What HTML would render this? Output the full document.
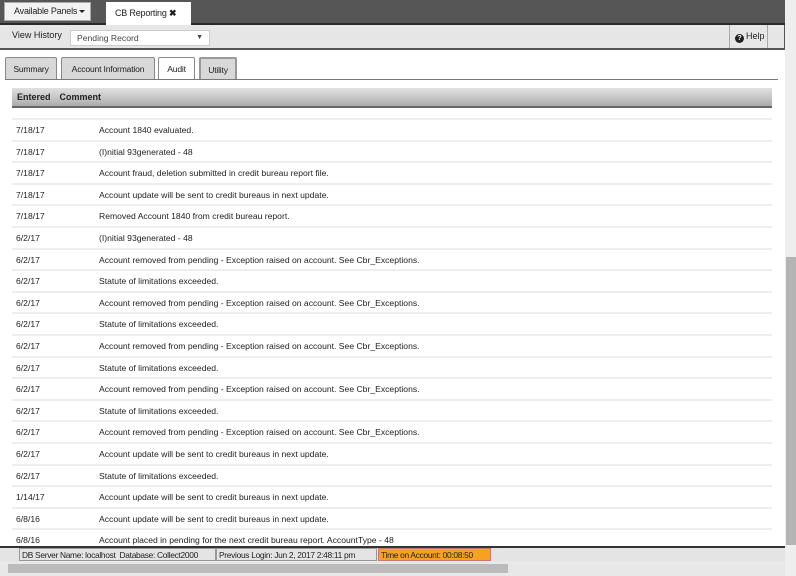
<!DOCTYPE html>
<html><head><style>
*{margin:0;padding:0;box-sizing:border-box}
body{width:796px;height:576px;overflow:hidden;background:#fff;font-family:"Liberation Sans",sans-serif;font-size:9px;color:#222;position:relative}
.abs{position:absolute}
.top{left:0;top:0;width:785px;height:25px;background:#565656;border-bottom:2px solid #2a2a2a}
.btn1{left:4px;top:2px;width:87px;height:19px;background:#f2f2f2;border:1px solid #aaa;font-size:9px;line-height:17px;padding-left:9px;letter-spacing:-0.2px}
.tri{display:inline-block;width:0;height:0;border-left:3px solid transparent;border-right:3px solid transparent;border-top:3px solid #222;vertical-align:middle;margin-left:2px}
.tab1{left:106px;top:2px;width:85px;height:23px;background:#fff;font-size:9px;line-height:22px;padding-left:9px;letter-spacing:-0.2px}
.bar2{left:0;top:25px;width:785px;height:25px;background:#e6e6e6;border-bottom:2px solid #555;border-right:1px solid #555}
.sel{left:70px;top:30px;width:140px;height:16px;background:#fff;border:1px solid #ccc;font-size:8.6px;line-height:14px;padding-left:6px;color:#444}
.help{left:729px;top:25px;width:39px;height:23px;border-left:1px solid #aaa;border-right:1px solid #aaa;font-size:9px;line-height:23px;padding-left:5px}
.q{display:inline-block;width:9px;height:9px;border-radius:50%;background:#222;color:#fff;font-size:7px;line-height:9px;text-align:center;font-weight:bold;margin-right:2px;vertical-align:-1px}
.tab{top:57px;height:22px;border:1px solid #888;border-bottom:none;background:#d8d8d8;font-size:8.6px;line-height:22px;text-align:center;border-radius:2px 2px 0 0;letter-spacing:-0.2px}
.hdr{left:12px;top:88px;width:760px;height:20px;background:linear-gradient(#e0e0e0,#c8c8c8 50%,#aaa);border-bottom:2px solid #666;font-weight:bold;font-size:9px;line-height:19px}
.row{position:absolute;left:12px;width:760px;height:21.6px;border-top:2px solid #eee;font-size:8.6px}
.row span{position:absolute;top:5px}
.status{left:0;top:546px;width:785px;height:15px;background:#e4e4e4;border-top:2px solid #333;font-size:8.4px;line-height:12px;letter-spacing:-0.3px}
.status div{position:absolute;top:0;height:13px;border:1px solid #999;padding:0 2px;white-space:nowrap}
</style></head><body>
<div class="abs top"></div>
<div class="abs btn1">Available Panels<span class="tri"></span></div>
<div class="abs tab1">CB Reporting <b>✖</b></div>
<div class="abs bar2"></div>
<div class="abs" style="left:12px;top:30px;font-size:9px">View History</div>
<div class="abs sel">Pending Record<span style="position:absolute;right:6px;font-size:7px">▼</span></div>
<div class="abs help"><span class="q">?</span>Help</div>
<div class="abs tab" style="left:5px;width:52px">Summary</div>
<div class="abs tab" style="left:61px;width:94px">Account Information</div>
<div class="abs tab" style="left:158px;width:37px;background:#fff;height:23px">Audit</div>
<div class="abs tab" style="left:199px;width:38px;border:2px solid #999;border-bottom:none">Utility</div>
<div class="abs" style="left:5px;top:79px;width:773px;height:1px;background:#777"></div>
<div class="abs hdr"><span style="margin-left:5px">Entered</span><span style="margin-left:9px">Comment</span></div>
<div id="rows"></div>
<div class="abs" style="left:785px;top:0;width:11px;height:576px;background:#eee"></div>
<div class="abs" style="left:786px;top:257px;width:10px;height:288px;background:#b4b4b4"></div>
<div class="abs status">
<div style="left:19px;width:197px">DB Server Name: localhost&nbsp; Database: Collect2000</div>
<div style="left:216px;width:161px">Previous Login: Jun 2, 2017 2:48:11 pm</div>
<div style="left:378px;width:113px;background:#f7a21c;border-color:#c77">Time on Account: 00:08:50</div>
</div>
<div class="abs" style="left:0;top:561px;width:785px;height:15px;background:#e8e8e8"></div>
<div class="abs" style="left:8px;top:564px;width:500px;height:9px;background:#bbb"></div>
<script>
var d=[["7/18/17","Account 1840 evaluated."],["7/18/17","(I)nitial 93generated - 48"],["7/18/17","Account fraud, deletion submitted in credit bureau report file."],["7/18/17","Account update will be sent to credit bureaus in next update."],["7/18/17","Removed Account 1840 from credit bureau report."],["6/2/17","(I)nitial 93generated - 48"]];
var a="Account removed from pending - Exception raised on account. See Cbr_Exceptions.",s="Statute of limitations exceeded.",u="Account update will be sent to credit bureaus in next update.";
d.push(["6/2/17",a],["6/2/17",s],["6/2/17",a],["6/2/17",s],["6/2/17",a],["6/2/17",s],["6/2/17",a],["6/2/17",s],["6/2/17",a],["6/2/17",u],["6/2/17",s],["1/14/17",u],["6/8/16",u],["6/8/16","Account placed in pending for the next credit bureau report. AccountType - 48"]);
var h="";for(var i=0;i<d.length;i++){h+='<div class="row" style="top:'+(118+i*21.6)+'px"><span style="left:4px">'+d[i][0]+'</span><span style="left:87px">'+d[i][1]+'</span></div>';}
document.getElementById("rows").innerHTML=h;
</script>
</body></html>
